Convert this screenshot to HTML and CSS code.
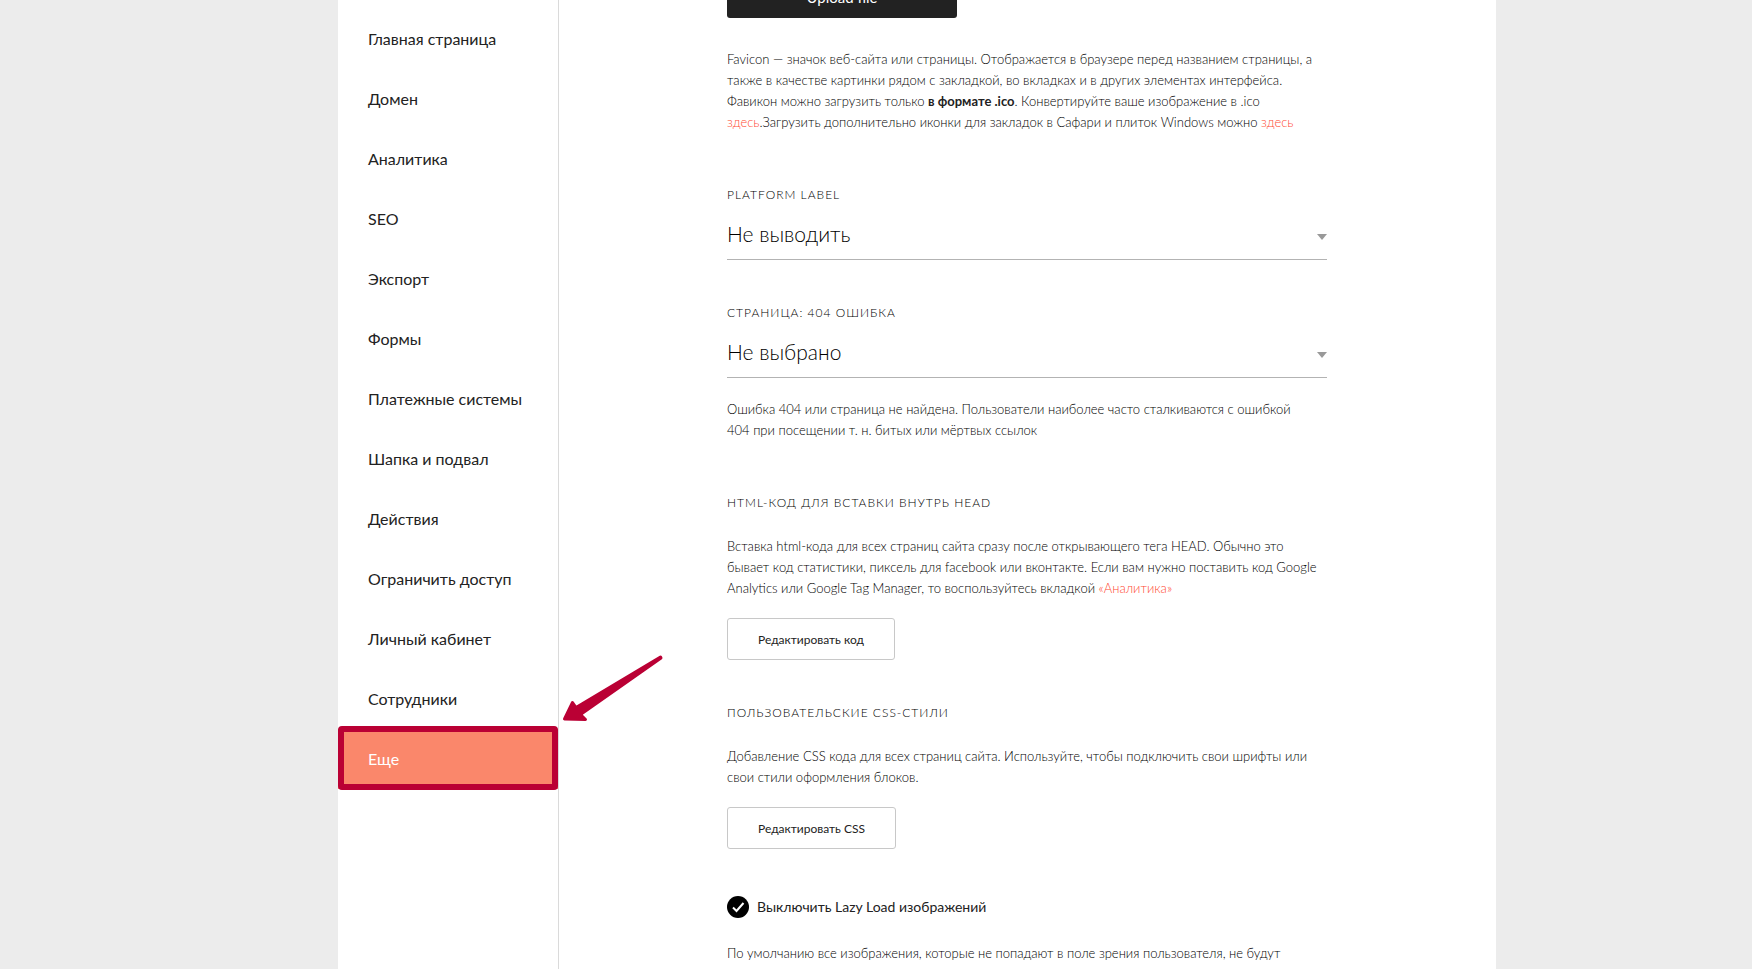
FILE: index.html
```html
<!DOCTYPE html>
<html lang="ru">
<head>
  <meta charset="UTF-8">
  <meta name="viewport" content="width=device-width, initial-scale=1.0">
  <title>Настройки сайта</title>
  <link rel="stylesheet" href="styles.css">
</head>
<body>
  <div class="panel">
    <!-- Settings menu -->
    <nav class="sidebar">
      <a class="menu-item" href="#main">Главная страница</a>
      <a class="menu-item" href="#domain">Домен</a>
      <a class="menu-item" href="#analytics">Аналитика</a>
      <a class="menu-item" href="#seo">SEO</a>
      <a class="menu-item" href="#export">Экспорт</a>
      <a class="menu-item" href="#forms">Формы</a>
      <a class="menu-item" href="#payments">Платежные системы</a>
      <a class="menu-item" href="#header">Шапка и подвал</a>
      <a class="menu-item" href="#actions">Действия</a>
      <a class="menu-item" href="#access">Ограничить доступ</a>
      <a class="menu-item" href="#members">Личный кабинет</a>
      <a class="menu-item" href="#team">Сотрудники</a>
      <a class="menu-item active" href="#more">Еще
        <svg class="pointer" width="114" height="70" viewBox="0 0 114 70" aria-hidden="true">
          <path d="M108.500 3 24 53.500 20.500 48.500 12.500 65 33.500 65.500 28.500 60.500 109 4Z" fill="#ba0034" stroke="#ba0034" stroke-width="3" stroke-linejoin="round"/>
        </svg>
      </a>
    </nav>

    <main class="content">
      <button class="upload-button" type="button">Upload file</button>
      <p class="hint favicon-hint">Favicon — значок веб-сайта или страницы. Отображается в браузере перед названием страницы, а<br>
        также в качестве картинки рядом с закладкой, во вкладках и в других элементах интерфейса.<br>
        Фавикон можно загрузить только <b>в формате .ico</b>. Конвертируйте ваше изображение в .ico<br>
        <a href="#convert">здесь</a>.Загрузить дополнительно иконки для закладок в Сафари и плиток Windows можно <a href="#icons">здесь</a></p>

      <section class="field label-field">
        <label class="title" for="platform-label">PLATFORM LABEL</label>
        <select class="select" id="platform-label">
          <option>Не выводить</option>
        </select>
      </section>

      <section class="field">
        <label class="title" for="page-404">СТРАНИЦА: 404 ОШИБКА</label>
        <select class="select" id="page-404">
          <option>Не выбрано</option>
        </select>
        <p class="hint select-hint">Ошибка 404 или страница не найдена. Пользователи наиболее часто сталкиваются с ошибкой<br>
          404 при посещении т. н. битых или мёртвых ссылок</p>
      </section>

      <section class="field code-field">
        <h2 class="title">HTML-КОД ДЛЯ ВСТАВКИ ВНУТРЬ HEAD</h2>
        <p class="hint code-hint">Вставка html-кода для всех страниц сайта сразу после открывающего тега HEAD. Обычно это<br>
          бывает код статистики, пиксель для facebook или вконтакте. Если вам нужно поставить код Google<br>
          Analytics или Google Tag Manager, то воспользуйтесь вкладкой <a href="#analytics">«Аналитика»</a></p>
        <button class="edit-button" type="button">Редактировать код</button>
      </section>

      <section class="field">
        <h2 class="title">ПОЛЬЗОВАТЕЛЬСКИЕ CSS-СТИЛИ</h2>
        <p class="hint code-hint">Добавление CSS кода для всех страниц сайта. Используйте, чтобы подключить свои шрифты или<br>
          свои стили оформления блоков.</p>
        <button class="edit-button" type="button">Редактировать CSS</button>
      </section>

      <section class="field lazy-field">
        <label class="check">
          <input type="checkbox" checked>
          Выключить Lazy Load изображений
        </label>
        <p class="hint check-hint">По умолчанию все изображения, которые не попадают в поле зрения пользователя, не будут</p>
      </section>
    </main>
  </div>
</body>
</html>
```
FILE: styles.css
```css
* {
  box-sizing: border-box;
}

body {
  margin: 0;
  height: 100vh;
  overflow: hidden;
  background-color: #ececec;
  font-family: Lato, "Open Sans", sans-serif;
  font-weight: 300;
  color: #222;
}

.panel {
  display: flex;
  min-height: 100vh;
  margin: 0 256px 0 338px;
  background-color: #fff;
}

.sidebar {
  flex: 0 0 221px;
  padding-top: 9px;
  border-right: 1px solid #dadada;
}

.menu-item {
  display: block;
  padding: 0 30px;
  font-size: 16px;
  font-weight: 400;
  line-height: 60px;
  color: #222;
  text-decoration: none;
}

.menu-item.active {
  position: relative;
  background-color: #fa876b;
  color: #fff;
}

/* frame round the active item */
.menu-item.active::after {
  content: "";
  position: absolute;
  inset: -3px 0 -1px;
  border: 6px solid #ba0034;
  border-radius: 4px;
}

.pointer {
  position: absolute;
  left: 214px;
  top: -75px;
}

.content {
  flex: 1;
  max-width: 768px;
  padding: 0 0 0 168px;
}

/* scrolled almost out of view */
.upload-button {
  display: block;
  width: 230px;
  height: 40px;
  margin-top: -22px;
  padding: 0 0 2px;
  border: 0;
  border-radius: 3px;
  background-color: #222;
  font-family: inherit;
  font-size: 15px;
  color: #fff;
}

.hint {
  margin: 0;
  font-size: 13px;
  line-height: 21px;
  color: #000;
}

.hint b {
  font-weight: 700;
  color: #222;
}

.hint a {
  color: #ff4a33;
  text-decoration: none;
}

.favicon-hint {
  margin-top: 31px;
}

.field {
  margin-top: 43px;
}

.label-field,
.code-field {
  margin-top: 52px;
}

.lazy-field {
  margin-top: 47px;
}

.title {
  display: block;
  margin: 0;
  font-size: 12px;
  font-weight: 300;
  line-height: 20px;
  letter-spacing: 1px;
  color: #000;
}

.select {
  display: block;
  width: 100%;
  height: 50px;
  margin-top: 5px;
  padding: 0 0 2px;
  border: 0;
  border-bottom: 1px solid #b3b3b3;
  border-radius: 0;
  appearance: none;
  background: url("data:image/svg+xml,%3Csvg xmlns='http://www.w3.org/2000/svg' width='10' height='6'%3E%3Cpath d='M0 0h10L5 6z' fill='%23999'/%3E%3C/svg%3E") no-repeat right 24px;
  font-family: inherit;
  font-size: 21px;
  font-weight: 300;
  color: #000;
}

.select-hint {
  margin-top: 21px;
}

.code-hint {
  margin-top: 23px;
}

.edit-button {
  display: block;
  height: 42px;
  margin-top: 19px;
  padding: 0 30px;
  border: 1px solid #c8c8c8;
  border-radius: 3px;
  background-color: #fff;
  font-family: inherit;
  font-size: 12px;
  color: #222;
}

.check {
  display: flex;
  align-items: center;
  gap: 8px;
  font-size: 14px;
  font-weight: 400;
  line-height: 22px;
}

.check input {
  width: 22px;
  height: 22px;
  margin: 0;
  border-radius: 50%;
  appearance: none;
  background: #000 url("data:image/svg+xml,%3Csvg xmlns='http://www.w3.org/2000/svg' width='22' height='22' fill='none' stroke='%23fff' stroke-width='2'%3E%3Cpath d='M6 11.500l3.500 3.500 7-8'/%3E%3C/svg%3E");
}

.check-hint {
  margin-top: 25px;
}
```
